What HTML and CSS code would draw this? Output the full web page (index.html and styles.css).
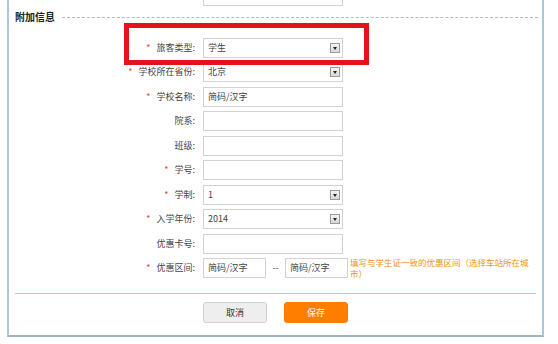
FILE: index.html
```
<!DOCTYPE html>
<html lang="zh-CN">

<head>
    <meta charset="UTF-8">
    <meta name="viewport" content="width=device-width, initial-scale=1.0">
    <title>附加信息</title>
    <link rel="stylesheet" href="styles.css">
</head>

<body>
    <div class="panel">
        <div class="prev-field"></div>

        <div class="section-title">
            <span>附加信息</span>
            <i class="dots"></i>
        </div>

        <div class="form">
            <label class="label"><em>*</em>旅客类型:</label>
            <div class="select">学生<b class="arrow"></b></div>

            <label class="label"><em>*</em>学校所在省份:</label>
            <div class="select">北京<b class="arrow"></b></div>

            <label class="label"><em>*</em>学校名称:</label>
            <div class="input">简码/汉字</div>

            <label class="label">院系:</label>
            <div class="input"></div>

            <label class="label">班级:</label>
            <div class="input"></div>

            <label class="label"><em>*</em>学号:</label>
            <div class="input"></div>

            <label class="label"><em>*</em>学制:</label>
            <div class="select">1<b class="arrow"></b></div>

            <label class="label"><em>*</em>入学年份:</label>
            <div class="select">2014<b class="arrow"></b></div>

            <label class="label">优惠卡号:</label>
            <div class="input"></div>

            <label class="label"><em>*</em>优惠区间:</label>
            <div class="range">
                <div class="input short">简码/汉字</div>
                <span class="dash">--</span>
                <div class="input short">简码/汉字</div>
                <p class="tip">填写与学生证一致的优惠区间（选择车站所在城市）</p>
            </div>
        </div>

        <div class="actions">
            <button class="btn cancel">取消</button>
            <button class="btn save">保存</button>
        </div>

        <!-- annotation box -->
        <div class="highlight"></div>
    </div>
</body>

</html>
```

FILE: styles.css
```
* {
    box-sizing: border-box;
}

body {
    margin: 0;
    background: #fff;
    font-family: "Noto Sans CJK SC", "Noto Sans", sans-serif;
    font-size: 9px;
    color: #444;
    overflow: hidden;
}

.panel {
    position: relative;
    margin-left: 7px;
    width: 537px;
    padding: 0 4px 12px 6px;
    border: 2px solid #a8c8dc;
    border-top: none;
    border-bottom-color: #9fb6c6;
}

.prev-field {
    margin-left: 188px;
    width: 140px;
    height: 6px;
    border: 1px solid #d2d2d2;
    border-top: none;
}

.section-title {
    display: flex;
    align-items: center;
    margin-top: 4px;
    height: 14px;
    font-weight: bold;
    font-size: 10px;
    line-height: 14px;
    color: #222;
}

.section-title .dots {
    flex: 1;
    margin-left: 7px;
    border-top: 1px dashed #b8b8b8;
}

.form {
    display: grid;
    grid-template-columns: 182px 1fr;
    column-gap: 6px;
    row-gap: 4.45px;
    margin-top: 14px;
}

.label {
    height: 20px;
    line-height: 20px;
    text-align: right;
    padding-right: 2px;
}

.label em {
    font-style: normal;
    color: #e5404a;
    margin-right: 6px;
}

.input,
.select {
    position: relative;
    width: 140px;
    height: 20px;
    line-height: 18px;
    padding-left: 4px;
    border: 1px solid #d2d2d2;
    background: #fff;
}

.select .arrow {
    position: absolute;
    right: 2px;
    top: 4px;
    width: 10px;
    height: 10px;
    border: 1px solid #9a9a9a;
    background: linear-gradient(#f4f4f4, #d8d8d8);
}

.select .arrow::after {
    content: "";
    position: absolute;
    left: 2px;
    top: 3px;
    border-left: 2px solid transparent;
    border-right: 2px solid transparent;
    border-top: 3px solid #222;
}

.range {
    display: flex;
    align-items: flex-start;
    height: 20px;
}

.range .short {
    width: 63px;
}

.range .dash {
    width: 19px;
    line-height: 20px;
    text-align: center;
    color: #555;
}

.range .short + .dash + .short {
    width: 63px;
}

.range .tip {
    margin: -1px 0 0 2px;
    width: 184px;
    font-size: 8.5px;
    line-height: 11px;
    color: #f0920e;
}

.actions {
    display: flex;
    gap: 17px;
    margin-top: 15px;
    margin-right: 2px;
    padding: 8px 0 0 188px;
    border-top: 1px solid #a9cde0;
}

.btn {
    width: 64px;
    height: 21px;
    border-radius: 3px;
    font-family: inherit;
    font-size: 9px;
    line-height: 19px;
    padding: 0;
}

.btn.cancel {
    background: #eeeeee;
    border: 1px solid #d0d0d0;
    color: #333;
}

.btn.save {
    background: #ff7e00;
    border: 1px solid #ff7e00;
    color: #fff;
}

.highlight {
    position: absolute;
    left: 115px;
    top: 23px;
    width: 245px;
    height: 42px;
    border: 5px solid #e2131b;
    pointer-events: none;
}
```
